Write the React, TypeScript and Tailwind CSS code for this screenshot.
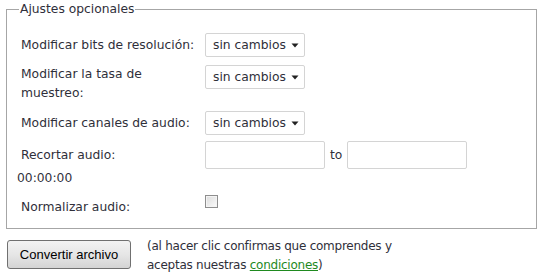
const textFont = { fontFamily: '"DejaVu Sans", Verdana, sans-serif' };
const buttonFont = { fontFamily: '"Liberation Sans", Arial, sans-serif' };

function Select() {
    return (
        <div className="w-[100px] h-[24px] border border-[#d4d4d4] rounded-[2px] bg-white flex items-center justify-between pl-[7px] pr-[5px] shrink-0">
            <span>sin cambios</span>
            <svg width="8" height="5" viewBox="0 0 8 5">
                <path d="M0.5 0.5 H7.5 L4 4.5 Z" fill="#222" />
            </svg>
        </div>
    );
}

function TextBox() {
    return <div className="w-[120px] h-[28px] border border-[#d4d4d4] rounded-[2px] bg-white shrink-0" />;
}

export default function App() {
    return (
        <div className="w-[545px] h-[278px] bg-white text-[12.3px] leading-[19px] text-[#2f2f3a]" style={textFont}>
            <fieldset className="ml-[6px] w-[531px] border border-[#a6a6a6] pl-[14px] pb-[11px]">
                <legend className="ml-[-2px] px-[1px] leading-[19px]">Ajustes opcionales</legend>

                {/* row 1 */}
                <div className="mt-[14px] flex items-center h-[24px]">
                    <div className="w-[184px] shrink-0">Modificar bits de resolución:</div>
                    <Select />
                </div>

                {/* row 2 */}
                <div className="mt-[8px] flex items-start">
                    <div className="w-[184px] shrink-0 pr-[30px]">Modificar la tasa de muestreo:</div>
                    <Select />
                </div>

                {/* row 3 */}
                <div className="mt-[8px] flex items-center h-[24px]">
                    <div className="w-[184px] shrink-0">Modificar canales de audio:</div>
                    <Select />
                </div>

                {/* row 4 */}
                <div className="mt-[6px] flex items-center h-[28px]">
                    <div className="w-[184px] shrink-0">Recortar audio:</div>
                    <TextBox />
                    <span className="mx-[5px]">to</span>
                    <TextBox />
                </div>
                <div className="ml-[-4px]">00:00:00</div>

                {/* row 5 */}
                <div className="mt-[7px] flex items-start">
                    <div className="w-[184px] shrink-0 pt-[3px]">Normalizar audio:</div>
                    <span className="w-[13px] h-[13px] border border-[#8e8e8e] bg-gradient-to-br from-[#dcdcdc] to-[#fbfbfb] shadow-[inset_0_0_0_1px_#f4f4f4]" />
                </div>
            </fieldset>

            <div className="mt-[11px] ml-[7px] flex items-start">
                <button
                    className="w-[124px] h-[29px] shrink-0 border border-[#707070] rounded-[3px] text-[13px] text-black bg-gradient-to-b from-[#f3f3f3] via-[#e6e6e6] to-[#d4d4d4]"
                    style={buttonFont}
                >
                    Convertir archivo
                </button>
                <p className="ml-[16px] mt-[-3px] w-[252px] text-[12px] tracking-[-0.25px]">
                    (al hacer clic confirmas que comprendes y aceptas nuestras{" "}
                    <a href="#" className="text-[#1f8a1f] underline">condiciones</a>)
                </p>
            </div>
        </div>
    );
}
